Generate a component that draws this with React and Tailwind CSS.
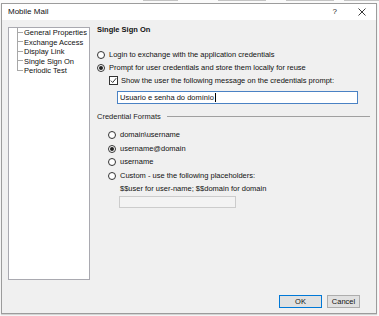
import React from "react";

const F = { fontFamily: '"Liberation Sans", Arial, sans-serif' };

function Radio({ checked }) {
  return (
    <div className="w-[8px] h-[8px] rounded-full border border-[#333333] bg-white flex items-center justify-center shrink-0">
      {checked && <div className="w-[4px] h-[4px] rounded-full bg-[#222222]" />}
    </div>
  );
}

function Check() {
  return (
    <div className="w-[9px] h-[9px] border border-[#333333] bg-white flex items-center justify-center shrink-0">
      <svg width="7" height="7" viewBox="0 0 7 7">
        <path d="M0.8 3.6 L2.7 5.5 L6.2 1.2" fill="none" stroke="#222" strokeWidth="0.9" />
      </svg>
    </div>
  );
}

function TreeItem({ label, last }) {
  return (
    <div className="flex h-[9.5px] items-stretch">
      <div className="w-[6px] flex flex-col shrink-0">
        <div className="h-1/2 border-l border-b border-[#a8a8a8]" />
        <div className={last ? "flex-1" : "flex-1 border-l border-[#a8a8a8]"} />
      </div>
      <div className="flex items-center pl-[1px] text-[7.5px] leading-none text-[#111]">
        {label}
      </div>
    </div>
  );
}

export default function App() {
  return (
    <div className="w-[379px] h-[316px] bg-[#fafafa] overflow-hidden text-[#111]" style={F}>
      <div className="h-[3px] flex items-start">
        <div className="ml-[143px] w-[36px] h-[1px] bg-[#c4c4c4]" />
        <div className="ml-[40px] w-[50px] h-[1px] bg-[#c4c4c4]" />
        <div className="ml-[20px] w-[50px] h-[1px] bg-[#c4c4c4]" />
        <div className="ml-[10px] w-[36px] h-[1px] bg-[#c4c4c4]" />
      </div>
      <div className="ml-[1px] w-[376px] h-[311px] border border-[#9c9c9c] flex flex-col bg-white shadow-[0_1px_1px_rgba(0,0,0,0.15)]">
        <div className="h-[16px] bg-white flex items-center pl-[6px] pr-[10px] shrink-0">
          <span className="text-[8px] leading-none">Mobile Mail</span>
          <div className="flex-1" />
          <span className="text-[8px] leading-none text-[#222] mr-[21px]">?</span>
          <svg width="8" height="8" viewBox="0 0 8 8">
            <path d="M0.5 0.5 L7.5 7.5 M7.5 0.5 L0.5 7.5" stroke="#222" strokeWidth="0.9" />
          </svg>
        </div>
        <div className="flex-1 bg-[#f0f0f0] flex flex-col">
          <div className="flex pt-[7px] pl-[6px]">
            <div className="w-[82px] h-[253px] bg-white border border-[#a9a9b0] pl-[8px] shrink-0">
              <TreeItem label="General Properties" />
              <TreeItem label="Exchange Access" />
              <TreeItem label="Display Link" />
              <TreeItem label="Single Sign On" />
              <TreeItem label="Periodic Test" last />
            </div>
            <div className="ml-[7px] flex flex-col text-[7.5px] leading-none">
              <div className="h-[12px] -mt-[3px] flex items-center font-bold">Single Sign On</div>
              <div className="h-[13px] mt-[12px] flex items-center">
                <Radio />
                <span className="ml-[4px]">Login to exchange with the application credentials</span>
              </div>
              <div className="h-[13px] flex items-center">
                <Radio checked />
                <span className="ml-[4px]">Prompt for user credentials and store them locally for reuse</span>
              </div>
              <div className="h-[13px] flex items-center pl-[12px]">
                <Check />
                <span className="ml-[3px]">Show the user the following message on the credentials prompt:</span>
              </div>
              <div className="ml-[20px] mt-[4px] w-[241px] h-[13px] bg-white border border-[#4a82c4] flex items-center pl-[2px]">
                <span>Usuario e senha do domínio</span>
                <span className="w-px h-[9px] bg-black ml-px" />
              </div>
              <div className="h-[13px] mt-[6px] flex items-center">
                <span className="text-[#222]">Credential Formats</span>
                <div className="ml-[6px] w-[203px] h-px bg-[#a0a0a0]" />
              </div>
              <div className="pl-[11px] flex flex-col">
                <div className="h-[13px] mt-[5px] flex items-center">
                  <Radio />
                  <span className="ml-[4px]">{"domain\\username"}</span>
                </div>
                <div className="h-[13px] mt-[1px] flex items-center">
                  <Radio checked />
                  <span className="ml-[4px]">username@domain</span>
                </div>
                <div className="h-[13px] flex items-center">
                  <Radio />
                  <span className="ml-[4px]">username</span>
                </div>
                <div className="h-[13px] mt-[1px] flex items-center">
                  <Radio />
                  <span className="ml-[4px]">Custom - use the following placeholders:</span>
                </div>
                <div className="h-[13px] flex items-center pl-[12px]">
                  $$user for user-name; $$domain for domain
                </div>
                <div className="ml-[11px] mt-[1px] w-[117px] h-[12px] bg-[#f3f3f3] border border-[#cccccc]" />
              </div>
            </div>
          </div>
          <div className="flex justify-end mt-[15px] pr-[16px] gap-[5px]">
            <div className="w-[43px] h-[13px] bg-[#e1e1e1] border border-[#0078d7] flex items-center justify-center text-[7.5px] leading-none">OK</div>
            <div className="w-[33px] h-[13px] bg-[#e1e1e1] border border-[#adadad] flex items-center justify-center text-[7.5px] leading-none">Cancel</div>
          </div>
        </div>
      </div>
    </div>
  );
}
